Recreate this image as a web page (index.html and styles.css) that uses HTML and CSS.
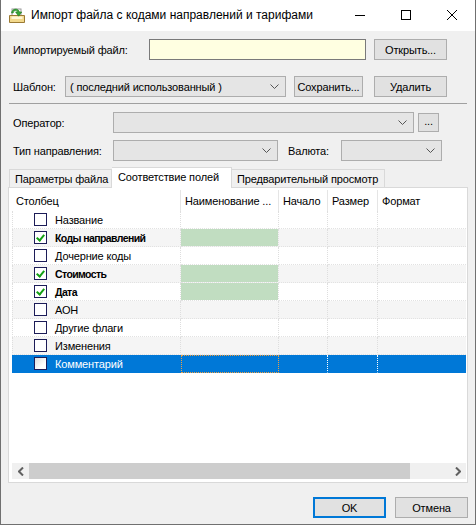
FILE: index.html
```html
<!DOCTYPE html>
<html lang="ru">
<head>
<meta charset="utf-8">
<title>Импорт файла с кодами направлений и тарифами</title>
<link rel="stylesheet" href="styles.css">
</head>
<body>
<div class="window">
  <div class="titlebar">
    <svg class="app-icon" width="16" height="16" viewBox="0 0 16 16">
      <rect x="3" y="2" width="9" height="8" fill="#ffffff" stroke="#9a9a9a" stroke-width="1"/>
      <path d="M0.5 8.5 H15.5 V15.5 H0.5 Z" fill="#f2d88c" stroke="#9b7a34"/>
      <path d="M2.5 9.5 H13.5 V12 H2.5 Z" fill="#fff6d6"/>
      <path d="M2.5 6 C3 1.5 9 0.5 10.5 5 L12.8 5 L9.6 9.2 L6.6 5 L8.6 5 C7.8 3 4.6 3 4.2 6 Z" fill="#3aa63a" stroke="#1f7a1f" stroke-width="0.6"/>
    </svg>
    <span class="title">Импорт файла с кодами направлений и тарифами</span>
    <div class="caption-buttons">
      <span class="cap"><svg width="10" height="10" viewBox="0 0 10 10"><path d="M0 5.5 H10" stroke="#000" stroke-width="1"/></svg></span>
      <span class="cap"><svg width="10" height="10" viewBox="0 0 10 10"><rect x="0.5" y="0.5" width="9" height="9" fill="none" stroke="#000" stroke-width="1"/></svg></span>
      <span class="cap"><svg width="10" height="10" viewBox="0 0 10 10"><path d="M0 0 L10 10 M10 0 L0 10" stroke="#000" stroke-width="1"/></svg></span>
    </div>
  </div>

  <div class="client">
    <div class="row row-file">
      <span class="lbl lbl-file">Импортируемый файл:</span>
      <div class="edit edit-file"></div>
      <div class="btn btn-open">Открыть...</div>
    </div>

    <div class="row row-template">
      <span class="lbl lbl-template">Шаблон:</span>
      <div class="combo combo-template">
        <span class="combo-text">( последний использованный )</span>
        <svg class="chev" width="9" height="5" viewBox="0 0 9 5"><polyline points="0.5,0.5 4.5,4.5 8.5,0.5" fill="none" stroke="#555" stroke-width="1"/></svg>
      </div>
      <div class="btn btn-save">Сохранить...</div>
      <div class="btn btn-delete">Удалить</div>
    </div>

    <div class="separator"></div>

    <div class="row row-operator">
      <span class="lbl lbl-wide">Оператор:</span>
      <div class="combo combo-operator">
        <svg class="chev" width="9" height="5" viewBox="0 0 9 5"><polyline points="0.5,0.5 4.5,4.5 8.5,0.5" fill="none" stroke="#555" stroke-width="1"/></svg>
      </div>
      <div class="btn btn-dots">...</div>
    </div>

    <div class="row row-type">
      <span class="lbl lbl-wide">Тип направления:</span>
      <div class="combo combo-type">
        <svg class="chev" width="9" height="5" viewBox="0 0 9 5"><polyline points="0.5,0.5 4.5,4.5 8.5,0.5" fill="none" stroke="#555" stroke-width="1"/></svg>
      </div>
      <span class="lbl lbl-currency">Валюта:</span>
      <div class="combo combo-currency">
        <svg class="chev" width="9" height="5" viewBox="0 0 9 5"><polyline points="0.5,0.5 4.5,4.5 8.5,0.5" fill="none" stroke="#555" stroke-width="1"/></svg>
      </div>
    </div>

    <div class="tabs">
      <div class="tab tab-params">Параметры файла</div>
      <div class="tab tab-fields active">Соответствие полей</div>
      <div class="tab tab-preview">Предварительный просмотр</div>
    </div>

    <div class="tabpanel">
      <div class="listview">
        <div class="lv-head">
          <div class="hc c1">Столбец</div>
          <div class="hc c2">Наименование ...</div>
          <div class="hc c3">Начало</div>
          <div class="hc c4">Размер</div>
          <div class="hc c5">Формат</div>
        </div>
        <div class="lv-body">
          <div class="lv-row">
            <div class="cell c1"><span class="chk"></span><span class="name">Название</span></div>
            <div class="cell c2"></div><div class="cell c3"></div><div class="cell c4"></div><div class="cell c5"></div>
          </div>
          <div class="lv-row alt">
            <div class="cell c1"><span class="chk on"></span><span class="name bold">Коды направлений</span></div>
            <div class="cell c2 mapped"></div><div class="cell c3"></div><div class="cell c4"></div><div class="cell c5"></div>
          </div>
          <div class="lv-row">
            <div class="cell c1"><span class="chk"></span><span class="name">Дочерние коды</span></div>
            <div class="cell c2"></div><div class="cell c3"></div><div class="cell c4"></div><div class="cell c5"></div>
          </div>
          <div class="lv-row alt">
            <div class="cell c1"><span class="chk on"></span><span class="name bold">Стоимость</span></div>
            <div class="cell c2 mapped"></div><div class="cell c3"></div><div class="cell c4"></div><div class="cell c5"></div>
          </div>
          <div class="lv-row">
            <div class="cell c1"><span class="chk on"></span><span class="name bold">Дата</span></div>
            <div class="cell c2 mapped"></div><div class="cell c3"></div><div class="cell c4"></div><div class="cell c5"></div>
          </div>
          <div class="lv-row alt">
            <div class="cell c1"><span class="chk"></span><span class="name">АОН</span></div>
            <div class="cell c2"></div><div class="cell c3"></div><div class="cell c4"></div><div class="cell c5"></div>
          </div>
          <div class="lv-row">
            <div class="cell c1"><span class="chk"></span><span class="name">Другие флаги</span></div>
            <div class="cell c2"></div><div class="cell c3"></div><div class="cell c4"></div><div class="cell c5"></div>
          </div>
          <div class="lv-row alt">
            <div class="cell c1"><span class="chk"></span><span class="name">Изменения</span></div>
            <div class="cell c2"></div><div class="cell c3"></div><div class="cell c4"></div><div class="cell c5"></div>
          </div>
          <div class="lv-row selected">
            <div class="cell c1"><span class="chk"></span><span class="name">Комментарий</span></div>
            <div class="cell c2 focus"></div><div class="cell c3"></div><div class="cell c4"></div><div class="cell c5"></div>
          </div>
        </div>
        <div class="hscroll">
          <span class="sb-arrow"><svg width="6" height="9" viewBox="0 0 6 9"><polyline points="5,0.5 1,4.5 5,8.5" fill="none" stroke="#606060" stroke-width="2"/></svg></span>
          <div class="sb-track"><div class="sb-thumb"></div></div>
          <span class="sb-arrow"><svg width="6" height="9" viewBox="0 0 6 9"><polyline points="1,0.5 5,4.5 1,8.5" fill="none" stroke="#606060" stroke-width="2"/></svg></span>
        </div>
      </div>
    </div>

    <div class="footer">
      <div class="btn btn-ok">OK</div>
      <div class="btn btn-cancel">Отмена</div>
    </div>
  </div>
</div>
</body>
</html>
```

FILE: styles.css
```css
* {
  box-sizing: border-box;
}

html, body {
  margin: 0;
  padding: 0;
  background: #f0f0f0;
}

body {
  font-family: "Liberation Sans", Arial, sans-serif;
  font-size: 11px;
  letter-spacing: -0.15px;
  color: #000;
}

.window {
  width: 476px;
  height: 525px;
  border: 1px solid #707070;
  border-top: 0;
  background: #f0f0f0;
  display: flex;
  flex-direction: column;
}

/* ---------- caption ---------- */
.titlebar {
  height: 31px;
  background: #fff;
  display: flex;
  align-items: center;
  flex: none;
}

.app-icon {
  margin-left: 8px;
  margin-top: -1px;
  flex: none;
}

.title {
  margin-left: 6px;
  font-size: 12px;
  letter-spacing: 0;
  margin-top: -1px;
}

.caption-buttons {
  margin-left: auto;
  display: flex;
  height: 30px;
  align-self: flex-start;
}

.cap {
  width: 46px;
  height: 30px;
  display: flex;
  align-items: center;
  justify-content: center;
}

.cap svg {
  display: block;
}

/* ---------- form ---------- */
.client {
  flex: 1;
  padding: 0 8px;
  display: flex;
  flex-direction: column;
}

.row {
  display: flex;
  align-items: center;
  height: 21px;
  flex: none;
}

.row-file { margin-top: 8px; }
.row-template { margin-top: 16px; }
.row-operator { margin-top: 8px; }
.row-type { margin-top: 7px; }

.lbl {
  padding-left: 4px;
  white-space: nowrap;
  flex: none;
}

.lbl-file { width: 140px; }
.lbl-template { width: 56px; }
.lbl-wide { width: 104px; }
.lbl-currency { width: 53px; margin-left: 10px; padding-left: 0; }

.edit {
  height: 21px;
  border: 1px solid #7a7a7a;
  background: #ffffe1;
  flex: none;
}

.edit-file { width: 217px; }

.btn {
  height: 21px;
  border: 1px solid #adadad;
  background: #e1e1e1;
  display: flex;
  align-items: center;
  justify-content: center;
  flex: none;
  white-space: nowrap;
}

.btn-open { width: 73px; margin-left: 8px; }
.btn-save { width: 69px; margin-left: 8px; }
.btn-delete { width: 73px; margin-left: 11px; }
.btn-dots { width: 21px; height: 19px; margin-left: 4px; padding-bottom: 3px; }

.combo {
  height: 21px;
  border: 1px solid #adadad;
  background: #e5e5e5;
  display: flex;
  align-items: center;
  padding: 0 6px 0 4px;
  flex: none;
}

.combo-text {
  flex: 1;
  white-space: nowrap;
}

.chev {
  margin-left: auto;
  display: block;
}

.combo-template { width: 221px; }
.combo-operator { width: 301px; }
.combo-type { width: 165px; }
.combo-currency { width: 101px; }

.separator {
  height: 1px;
  background: #a0a0a0;
  margin-top: 6px;
  flex: none;
}

/* ---------- tabs ---------- */
.tabs {
  display: flex;
  align-items: flex-end;
  height: 20px;
  margin-top: 6px;
  flex: none;
  position: relative;
  z-index: 1;
}

.tab {
  height: 18px;
  border: 1px solid #d9d9d9;
  border-bottom: 0;
  background: #f0f0f0;
  display: flex;
  align-items: center;
  padding-left: 5px;
  padding-top: 1px;
  white-space: nowrap;
}

.tab-params { width: 103px; }
.tab-fields { width: 120px; }
.tab-preview { width: 153px; border-left: 0; }

.tab.active {
  height: 21px;
  background: #fff;
  margin-bottom: -1px;
  padding-bottom: 4px;
  padding-left: 6px;
  border-left: 0;
}

.tabpanel {
  margin: 0 -1px;
  height: 296px;
  border: 1px solid #d9d9d9;
  background: #fff;
  padding: 2px 1px 3px 3px;
  flex: none;
}

/* ---------- list view ---------- */
.listview {
  height: 289px;
  display: flex;
  flex-direction: column;
  background: #fff;
}

.lv-head {
  display: flex;
  height: 21px;
  flex: none;
}

.hc {
  height: 21px;
  border-right: 1px solid #e5e5e5;
  padding-left: 4px;
  display: flex;
  align-items: center;
  white-space: nowrap;
  overflow: hidden;
}

.c1 { width: 169px; flex: none; }
.c2 { width: 98px; flex: none; }
.c3 { width: 49px; flex: none; }
.c4 { width: 50px; flex: none; }
.c5 { flex: 1; border-right: 0; }

.hc.c2 { padding-left: 4px; }

.lv-body {
  flex: 1;
}

.lv-row {
  display: flex;
  height: 18px;
}

.lv-row.alt {
  background: #f5f5f5;
}

.cell {
  height: 18px;
  border-right: 1px dotted #dedede;
  border-bottom: 1px dotted #e2e2e2;
  background-clip: padding-box;
}

.cell.c1 {
  border-left: 1px dotted #dedede;
  display: flex;
  align-items: center;
  padding-left: 21px;
}

.cell.c5 {
  border-right: 0;
}

.cell.mapped {
  background-color: #c1ddc1;
}

.chk {
  width: 13px;
  height: 13px;
  border: 1px solid #1c1c58;
  background: #fff;
  position: relative;
  flex: none;
}

.chk.on::after {
  content: "";
  position: absolute;
  left: 3px;
  top: 1px;
  width: 3px;
  height: 6px;
  border-right: 2px solid #14a014;
  border-bottom: 2px solid #14a014;
  transform: rotate(40deg);
}

.name {
  margin-left: 8px;
  white-space: nowrap;
}

.name.bold {
  font-size: 10.5px;
  letter-spacing: -0.6px;
  font-weight: bold;
}

.lv-row.selected {
  background: #0078d7;
  color: #fff;
}

.lv-row.selected .cell {
  border-bottom-color: transparent;
  border-right-color: #fff;
}

.lv-row.selected .cell.c1 {
  border-right-color: transparent;
  border-left-color: transparent;
}

.lv-row.selected .chk {
  background: linear-gradient(135deg, #dcdcdc, #ffffff 70%);
}

.cell.focus {
  outline: 1px dotted #f0a040;
  outline-offset: -1px;
}

/* ---------- horizontal scroll bar ---------- */
.hscroll {
  height: 16px;
  background: #f0f0f0;
  display: flex;
  align-items: center;
  flex: none;
}

.sb-arrow {
  width: 17px;
  height: 16px;
  display: flex;
  align-items: center;
  justify-content: center;
  flex: none;
}

.sb-track {
  flex: 1;
  height: 16px;
}

.sb-thumb {
  width: 381px;
  height: 16px;
  background: #cdcdcd;
}

/* ---------- dialog buttons ---------- */
.footer {
  display: flex;
  justify-content: flex-end;
  margin-top: 14px;
  margin-right: -1px;
}

.btn-ok {
  width: 73px;
  border: 2px solid #0078d7;
}

.btn-cancel {
  width: 73px;
  margin-left: 9px;
}
```
